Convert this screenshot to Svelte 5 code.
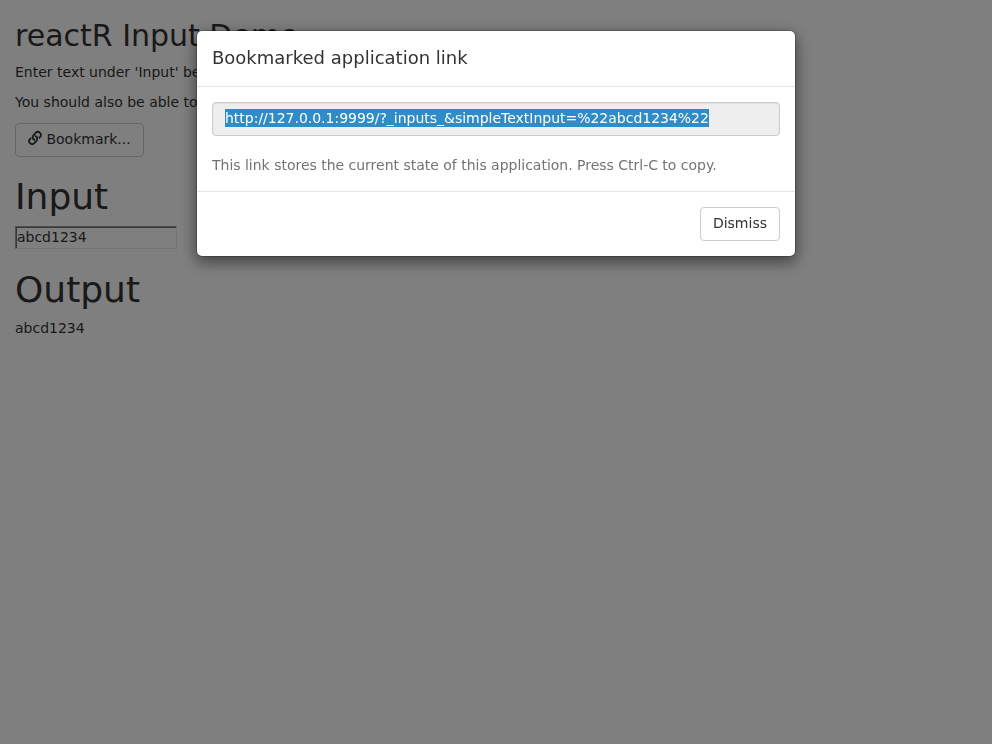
<script>
  let text = $state('abcd1234');
  let link = $derived(`http://127.0.0.1:9999/?_inputs_&simpleTextInput=%22${text}%22`);
  let open = $state(true);
</script>

<div class="page">
  <h2>reactR Input Demo</h2>
  <p>Enter text under 'Input' below to see it.</p>
  <p>You should also be able to bookmark it.</p>
  <button class="btn" onclick={() => (open = true)}>
    <svg class="link-icon" viewBox="0 0 14 14" width="14" height="14" aria-hidden="true">
      <g transform="translate(7 7) rotate(-49)" fill="none" stroke="currentColor" stroke-width="1.8">
        <path d="M2.4 3.1 H4 A3 3 0 0 0 4.4 -2.9 H0.6 A2.9 2.9 0 0 0 -1.6 1.4" />
        <path d="M-2.4 -3.1 H-4 A3 3 0 0 0 -4.4 2.9 H-0.6 A2.9 2.9 0 0 0 1.6 -1.4" />
      </g>
    </svg>
    Bookmark...
  </button>
  <h1>Input</h1>
  <input class="plain" type="text" bind:value={text} />
  <h1>Output</h1>
  <div class="output">{text}</div>
</div>

{#if open}
  <div class="backdrop"></div>
  <div class="modal">
    <div class="dialog" role="dialog">
      <header><h4>Bookmarked application link</h4></header>
      <section>
        <div class="url"><span>{link}</span></div>
        <div class="help">This link stores the current state of this application. Press Ctrl-C to copy.</div>
      </section>
      <footer><button class="btn" onclick={() => (open = false)}>Dismiss</button></footer>
    </div>
  </div>
{/if}

<style>
  :global(body) {
    margin: 0;
    background: #fff;
    color: #333;
    font: 14px/20px "DejaVu Sans", sans-serif;
  }
  .page {
    padding: 0 15px;
    display: flow-root;
  }
  h1, h2 {
    font-weight: 400;
    line-height: 1.1;
    margin: 20px 0 10px;
  }
  h1 { font-size: 36px; }
  h2 {
    font-size: 30px;
    line-height: 31px;
    padding-bottom: 2px;
  }
  p, .output {
    margin: 0 0 10px;
    line-height: 18px;
    padding-bottom: 2px;
  }
  .btn {
    display: block;
    box-sizing: border-box;
    height: 34px;
    padding: 5px 12px 7px;
    border: 1px solid #ccc;
    border-radius: 4px;
    background: #fff;
    color: #333;
    font: inherit;
    white-space: nowrap;
  }
  .link-icon {
    vertical-align: -1px;
    overflow: visible;
  }
  .plain {
    display: block;
    box-sizing: border-box;
    width: 162px;
    height: 23px;
    margin: -1px 0 21px;
    padding: 0 1px 1px;
    border: 1px solid;
    border-color: #9a9a9a #e6e6e6 #e6e6e6 #9a9a9a;
    border-radius: 0;
    box-shadow: inset 1px 1px #707070;
    background: #fff;
    color: #333;
    font: inherit;
    letter-spacing: -0.015px;
  }
  .backdrop {
    position: fixed;
    inset: 0;
    background: rgba(0, 0, 0, 0.5);
  }
  .modal {
    position: fixed;
    inset: 0;
  }
  .dialog {
    box-sizing: border-box;
    width: 600px;
    margin: 30px auto;
    background: #fff;
    background-clip: padding-box;
    border: 1px solid rgba(0, 0, 0, 0.2);
    border-radius: 6px;
    box-shadow: 0 5px 15px rgba(0, 0, 0, 0.5);
  }
  header {
    padding: 15px;
    border-bottom: 1px solid #e5e5e5;
  }
  h4 {
    margin: 0;
    font-size: 18px;
    font-weight: 400;
    line-height: 23px;
    height: 24.7px;
  }
  section { padding: 15px; }
  .url {
    box-sizing: border-box;
    height: 34px;
    padding: 5px 12px 7px;
    border: 1px solid #ccc;
    border-radius: 4px;
    background: #eee;
    box-shadow: inset 0 1px 1px rgba(0, 0, 0, 0.075);
    white-space: nowrap;
  }
  .url span {
    display: inline-block;
    height: 18px;
    line-height: 18px;
    background: #308cc6;
    color: #fff;
    letter-spacing: -0.015px;
  }
  .help {
    margin-top: 20px;
    line-height: 18px;
    padding-bottom: 2px;
    color: #737373;
    letter-spacing: -0.013px;
  }
  footer {
    display: flex;
    justify-content: flex-end;
    padding: 15px;
    border-top: 1px solid #e5e5e5;
  }
</style>
